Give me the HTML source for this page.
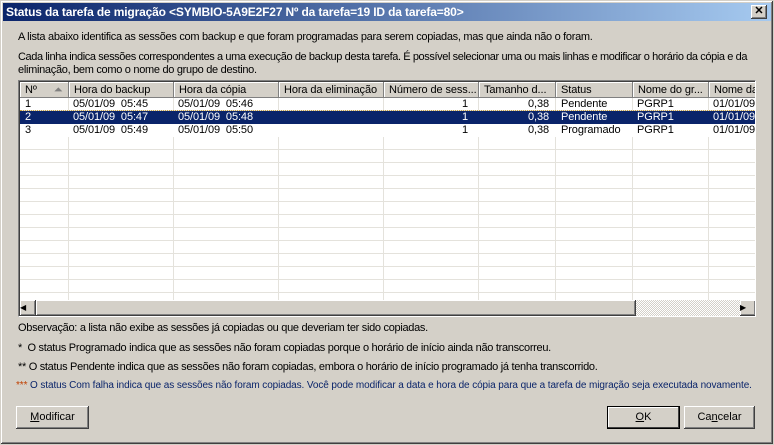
<!DOCTYPE html>
<html><head><meta charset="utf-8"><style>
*{margin:0;padding:0;box-sizing:border-box}
body{width:774px;height:445px;overflow:hidden;background:#d4d0c8;font-family:"Liberation Sans",sans-serif;font-size:11px;color:#000;position:relative;letter-spacing:-0.3px}
.win{position:absolute;left:0;top:0;width:774px;height:445px;border:1px solid #d4d0c8;box-shadow:inset -1px -1px #404040,inset 1px 1px #fff,inset -2px -2px #808080}
.title{position:absolute;left:3px;top:3px;width:768px;height:18px;background:linear-gradient(90deg,#0a246a,#a6caf0);color:#fff;font-weight:bold;font-size:12px;line-height:18px;padding-left:3px;letter-spacing:-0.15px}
.close{position:absolute;left:751px;top:5px;width:16px;height:14px;background:#d4d0c8;box-shadow:inset -1px -1px #404040,inset 1px 1px #fff,inset -2px -2px #808080;font-size:11px;font-weight:bold;text-align:center;line-height:13px;color:#000;letter-spacing:0}
.t{position:absolute;left:18px;white-space:nowrap}
.list{position:absolute;left:18px;top:80px;width:738px;height:237px;background:#fff;border:1px solid;border-color:#808080 #fff #fff #808080;box-shadow:inset 1px 1px #404040;overflow:hidden;letter-spacing:-0.1px}
.hdr{position:absolute;top:1px;height:16px;background:#d4d0c8;box-shadow:inset -1px -1px #808080,inset 1px 1px #fff;line-height:16px;padding-left:5px;white-space:nowrap;overflow:hidden}
.grid{position:absolute;left:1px;top:17px;width:736px;height:202px;background:repeating-linear-gradient(180deg,transparent 0 12px,#e4e2dc 12px 13px)}
.vl{position:absolute;top:17px;height:202px;width:1px;background:#e4e2dc}
.row{position:absolute;left:1px;width:736px;height:13px;line-height:13px;white-space:nowrap}
.row span{position:absolute;top:0}
.sel{background:#0a246a;color:#fff}
.sb{position:absolute;left:1px;top:219px;width:736px;height:16px;background-color:#e8e6e2;background-image:repeating-conic-gradient(#d4d0c8 0 25%,#fff 0 50%);background-size:2px 2px}
.sbb{position:absolute;top:0;height:16px;background:#d4d0c8;box-shadow:inset -1px -1px #404040,inset 1px 1px #fff,inset -2px -2px #808080}
.btn{position:absolute;height:23px;background:#d4d0c8;box-shadow:inset -1px -1px #404040,inset 1px 1px #fff,inset -2px -2px #808080;text-align:center;line-height:22px;letter-spacing:0}
</style></head><body>
<div class="win"></div>
<div class="title">Status da tarefa de migração &lt;SYMBIO-5A9E2F27 Nº da tarefa=19 ID da tarefa=80&gt;</div>
<div class="close">✕</div>
<div class="t" style="top:31px">A lista abaixo identifica as sessões com backup e que foram programadas para serem copiadas, mas que ainda não o foram.</div>
<div class="t" style="top:51px;letter-spacing:-0.4px">Cada linha indica sessões correspondentes a uma execução de backup desta tarefa. É possível selecionar uma ou mais linhas e modificar o horário da cópia e da</div>
<div class="t" style="top:64px">eliminação, bem como o nome do grupo de destino.</div>
<div class="list">
<div class="hdr" style="left:1px;width:49px">Nº <span style="color:#808080;margin-left:14px">⏶</span></div>
<div class="hdr" style="left:50px;width:105px">Hora do backup</div>
<div class="hdr" style="left:155px;width:105px">Hora da cópia</div>
<div class="hdr" style="left:260px;width:105px">Hora da eliminação</div>
<div class="hdr" style="left:365px;width:95px">Número de sess...</div>
<div class="hdr" style="left:460px;width:77px">Tamanho d...</div>
<div class="hdr" style="left:537px;width:77px">Status</div>
<div class="hdr" style="left:614px;width:76px">Nome do gr...</div>
<div class="hdr" style="left:690px;width:60px">Nome da</div>
<div class="grid"></div>
<div class="vl" style="left:49px"></div><div class="vl" style="left:154px"></div><div class="vl" style="left:259px"></div><div class="vl" style="left:364px"></div><div class="vl" style="left:459px"></div><div class="vl" style="left:536px"></div><div class="vl" style="left:613px"></div><div class="vl" style="left:689px"></div>
<div class="row" style="top:17px;border-bottom:1px dotted #c8a040"><span style="left:5px">1</span><span style="left:53px">05/01/09&nbsp; 05:45</span><span style="left:158px">05/01/09&nbsp; 05:46</span><span style="left:442px">1</span><span style="left:508px">0,38</span><span style="left:541px">Pendente</span><span style="left:617px">PGRP1</span><span style="left:693px">01/01/09</span></div>
<div class="row sel" style="top:30px"><span style="left:5px">2</span><span style="left:53px">05/01/09&nbsp; 05:47</span><span style="left:158px">05/01/09&nbsp; 05:48</span><span style="left:442px">1</span><span style="left:508px">0,38</span><span style="left:541px">Pendente</span><span style="left:617px">PGRP1</span><span style="left:693px">01/01/09</span></div>
<div class="row" style="top:43px;background:#fff"><span style="left:5px">3</span><span style="left:53px">05/01/09&nbsp; 05:49</span><span style="left:158px">05/01/09&nbsp; 05:50</span><span style="left:442px">1</span><span style="left:508px">0,38</span><span style="left:541px">Programado</span><span style="left:617px">PGRP1</span><span style="left:693px">01/01/09</span></div>
<div class="sb">
<div class="sbb" style="left:0;width:16px;font-size:8px;line-height:16px">◀</div>
<div class="sbb" style="left:16px;width:600px"></div>
<div class="sbb" style="left:720px;width:16px;font-size:8px;line-height:16px">▶</div>
</div>
</div>
<div class="t" style="top:322px">Observação: a lista não exibe as sessões já copiadas ou que deveriam ter sido copiadas.</div>
<div class="t" style="top:342px">* &nbsp;O status Programado indica que as sessões não foram copiadas porque o horário de início ainda não transcorreu.</div>
<div class="t" style="top:361px">** O status Pendente indica que as sessões não foram copiadas, embora o horário de início programado já tenha transcorrido.</div>
<div class="t" style="top:380px;font-size:10px;color:#0a246a;left:16px;letter-spacing:-0.1px"><span style="color:#c04000">***</span> O status Com falha indica que as sessões não foram copiadas. Você pode modificar a data e hora de cópia para que a tarefa de migração seja executada novamente.</div>
<div class="btn" style="left:16px;top:406px;width:73px"><u>M</u>odificar</div>
<div class="btn" style="left:607px;top:406px;width:73px;box-shadow:inset -1px -1px #000,inset 1px 1px #000,inset -2px -2px #404040,inset 2px 2px #fff"><u>O</u>K</div>
<div class="btn" style="left:684px;top:406px;width:71px">Ca<u>n</u>celar</div>
</body></html>
